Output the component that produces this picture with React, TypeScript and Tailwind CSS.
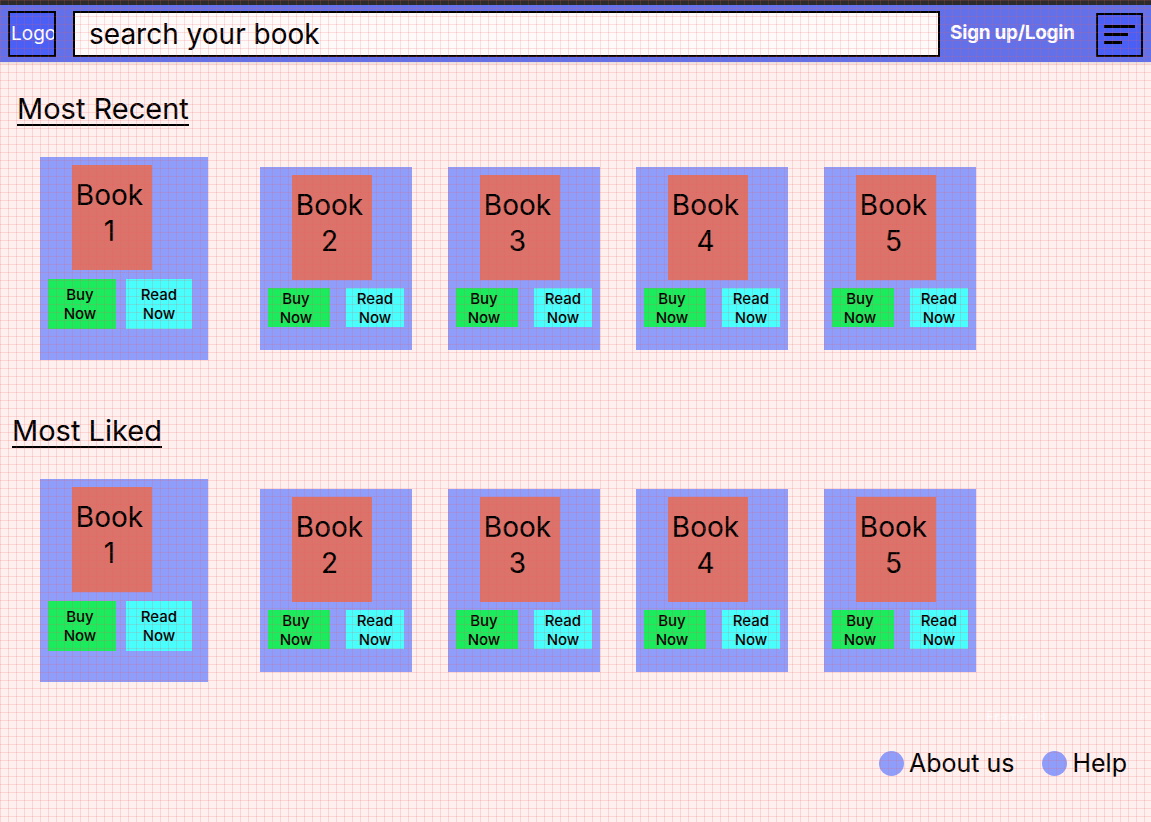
const books = [1, 2, 3, 4, 5];

function BookCard({ n, first }: { n: number; first: boolean }) {
  if (first) {
    return (
      <div className="w-[168px] h-[203px] bg-[#8f9dfb] pt-2 pl-2 flex flex-col shrink-0">
        <div className="ml-6 w-[80px] h-[105px] bg-[#dc736b] text-center text-[28px] leading-[36px] pt-[12px] pr-[5px]">
          Book
          <br />
          {n}
        </div>
        <div className="flex gap-[10px] mt-[9px]">
          <div className="w-[68px] h-[50px] bg-[#1aec5e] flex items-center justify-center text-center text-[15px] font-medium leading-[19px] pr-[4px]">
            Buy
            <br />
            Now
          </div>
          <div className="w-[66px] h-[50px] bg-[#48fffd] flex items-center justify-center text-center text-[15px] font-medium leading-[19px]">
            Read
            <br />
            Now
          </div>
        </div>
      </div>
    );
  }
  return (
    <div className="w-[152px] h-[183px] mt-[10px] bg-[#8f9dfb] pt-2 pl-2 flex flex-col shrink-0">
      <div className="ml-6 w-[80px] h-[105px] bg-[#dc736b] text-center text-[28px] leading-[36px] pt-[12px] pr-[5px]">
        Book
        <br />
        {n}
      </div>
      <div className="flex gap-4 mt-2">
        <div className="w-[62px] h-[39px] bg-[#1aec5e] flex items-center justify-center text-center text-[15px] font-medium leading-[19px] pr-[6px]">
          Buy
          <br />
          Now
        </div>
        <div className="w-[58px] h-[39px] bg-[#48fffd] flex items-center justify-center text-center text-[15px] font-medium leading-[19px]">
          Read
          <br />
          Now
        </div>
      </div>
    </div>
  );
}

function BookRow() {
  return (
    <div className="flex items-start pl-10">
      <BookCard n={1} first />
      <div className="flex gap-9 ml-[52px]">
        {books.slice(1).map((n) => (
          <BookCard key={n} n={n} first={false} />
        ))}
      </div>
    </div>
  );
}

export default function App() {
  return (
    <div className="relative min-h-[822px] bg-[#fdf0ef] text-black font-['Inter',sans-serif] overflow-hidden">
      {/* Header */}
      <div className="h-[5px] bg-[#2c2c2c]" />
      <header className="h-[57px] bg-[#6271ea] flex items-center pl-2 pr-2 shadow-[0_2px_2px_rgba(0,0,0,0.08)]">
        <div className="w-[48px] h-[46px] bg-[#4a5ff5] border-2 border-black overflow-hidden text-white text-[19px] leading-[42px] pl-px whitespace-nowrap">
          Logo
        </div>
        <div className="ml-[17px] w-[867px] h-[46px] bg-[#fffafa] border-2 border-black flex items-center pl-[14px] text-[28px]">
          search your book
        </div>
        <div className="ml-[10px] text-white font-bold text-[19px] tracking-[-0.3px]">Sign up/Login</div>
        <div className="ml-auto w-[47px] h-[44px] mt-[2px] bg-[#4a5ff5] border-2 border-black flex flex-col justify-center gap-[5px] pl-[6px]">
          <div className="w-[31px] h-[3px] bg-black" />
          <div className="w-[24px] h-[3px] bg-black" />
          <div className="w-[18px] h-[3px] bg-black" />
        </div>
      </header>

      {/* Most Recent */}
      <section className="pt-[32px]">
        <h2 className="ml-[17px] inline-block text-[29px] leading-[30px] border-b-2 border-black">Most Recent</h2>
        <div className="mt-[31px]">
          <BookRow />
        </div>
      </section>

      {/* Most Liked */}
      <section className="pt-[56px]">
        <h2 className="ml-3 inline-block text-[29px] leading-[30px] border-b-2 border-black">Most Liked</h2>
        <div className="mt-[31px]">
          <BookRow />
        </div>
      </section>

      {/* Footer */}
      <footer className="relative flex justify-end items-center gap-7 pr-6 mt-[66px]">
        <span className="absolute right-[105px] -top-[42px] text-white/70 text-[14px]">Frame 18</span>
        <div className="flex items-center gap-[5px]">
          <div className="w-[25px] h-[25px] rounded-full bg-[#8f9dfb]" />
          <span className="text-[25px] leading-[30px]">About us</span>
        </div>
        <div className="flex items-center gap-[5px]">
          <div className="w-[25px] h-[25px] rounded-full bg-[#8f9dfb]" />
          <span className="text-[25px] leading-[30px]">Help</span>
        </div>
      </footer>

      {/* grid overlay */}
      <div className="pointer-events-none absolute inset-0 bg-[linear-gradient(to_right,rgba(240,90,90,0.18)_1px,transparent_1px),linear-gradient(to_bottom,rgba(240,90,90,0.18)_1px,transparent_1px)] bg-[size:8px_8px]" />
    </div>
  );
}
